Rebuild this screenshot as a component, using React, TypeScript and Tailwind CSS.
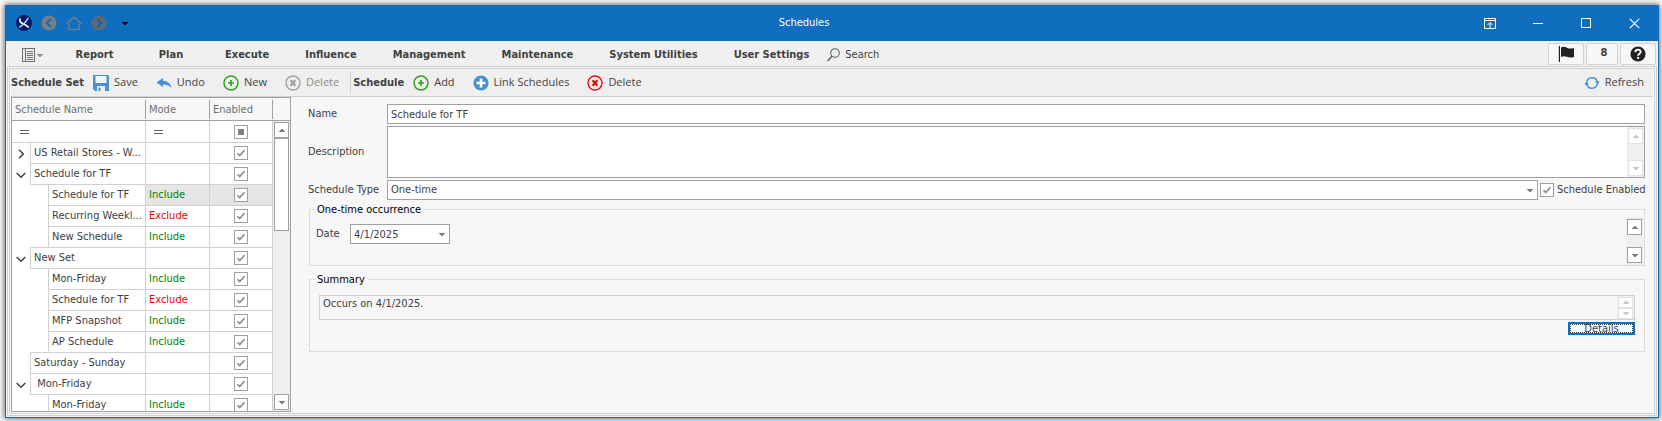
import React from "react";

const UI = "font-['DejaVu_Sans_Condensed','DejaVu_Sans',sans-serif]";
const SEGOE = "font-['Open_Sans','Noto_Sans',sans-serif]";

type Row = {
  name: string;
  level: 0 | 1;
  expander?: "open" | "closed";
  mode?: "Include" | "Exclude";
  selected?: boolean;
};

const rows: Row[] = [
  { name: "US Retail Stores - W...", level: 0, expander: "closed" },
  { name: "Schedule for TF", level: 0, expander: "open" },
  { name: "Schedule for TF", level: 1, mode: "Include", selected: true },
  { name: "Recurring Weekl...", level: 1, mode: "Exclude" },
  { name: "New Schedule", level: 1, mode: "Include" },
  { name: "New Set", level: 0, expander: "open" },
  { name: "Mon-Friday", level: 1, mode: "Include" },
  { name: "Schedule for TF", level: 1, mode: "Exclude" },
  { name: "MFP Snapshot", level: 1, mode: "Include" },
  { name: "AP Schedule", level: 1, mode: "Include" },
  { name: "Saturday - Sunday", level: 0 },
  { name: "\u00a0Mon-Friday", level: 0, expander: "open" },
  { name: "Mon-Friday", level: 1, mode: "Include" },
];

function Caret({ up = false, className = "" }: { up?: boolean; className?: string }) {
  return (
    <svg width="6" height="3" viewBox="0 0 6 3" className={className} shapeRendering="crispEdges" aria-hidden="true">
      <path d={up ? "M0 3V2h1V1h1V0h2v1h1v1h1v1z" : "M0 0v1h1v1h1v1h2V2h1V1h1V0z"} fill="currentColor" />
    </svg>
  );
}

function ScrollButton({ up = false, dim = false, short = false, label }: { up?: boolean; dim?: boolean; short?: boolean; label: string }) {
  return (
    <button
      type="button"
      aria-label={label}
      className={`flex w-[15px] shrink-0 items-center justify-center border bg-white ${short ? "h-[11px]" : "h-4"} ${
        dim ? "border-[#e2e2e2] text-[#c8c8c8]" : "border-[#a0a0a0] text-[#808080]"
      }`}
    >
      <Caret up={up} />
    </button>
  );
}

function CheckBox({ id, label, mixed = false }: { id?: string; label?: string; mixed?: boolean }) {
  return (
    <span className="inline-grid size-[14px] shrink-0 place-items-center">
      <input
        id={id}
        type="checkbox"
        aria-label={label}
        defaultChecked={!mixed}
        className="peer col-start-1 row-start-1 size-[14px] appearance-none border border-[#a0a0a0] bg-white"
      />
      {mixed ? (
        <span className="pointer-events-none col-start-1 row-start-1 size-[6px] bg-[#808080]" />
      ) : (
        <svg width="10" height="10" viewBox="0 0 10 10" className="pointer-events-none invisible col-start-1 row-start-1 peer-checked:visible" aria-hidden="true">
          <path d="M1.5 5.200l2.200 2.300L8.500 2.300" fill="none" stroke="#888" strokeWidth="1.600" />
        </svg>
      )}
    </span>
  );
}

function CirclePlus({ solid = false }: { solid?: boolean }) {
  return solid ? (
    <svg width="16" height="16" viewBox="0 0 16 16" aria-hidden="true">
      <circle cx="8" cy="8" r="7.6" fill="#4a90d0" />
      <path d="M8 3.5v9M3.5 8h9" stroke="#fff" strokeWidth="2.6" />
    </svg>
  ) : (
    <svg width="16" height="16" viewBox="0 0 16 16" aria-hidden="true">
      <circle cx="8" cy="8" r="7" fill="none" stroke="#2fa31c" strokeWidth="1.5" />
      <path d="M8 5v6M5 8h6" stroke="#2fa31c" strokeWidth="1.7" />
    </svg>
  );
}

function CircleX({ color }: { color: string }) {
  return (
    <svg width="16" height="16" viewBox="0 0 16 16" aria-hidden="true">
      <circle cx="8" cy="8" r="7" fill="none" stroke={color} strokeWidth="1.4" />
      <path d="M5.6 5.200l4.800 5.600M10.400 5.200l-4.800 5.600" stroke={color} strokeWidth="2.3" />
    </svg>
  );
}

function SaveIcon() {
  return (
    <svg width="16" height="16" viewBox="0 0 16 16" aria-hidden="true">
      <path d="M0 0h15l1 1v15H2l-2-2z" fill="#4a90d0" />
      <path d="M2.500 1h11v7h-11z" fill="#f2f6fa" />
      <path d="M4 11h8v5H4z" fill="#efefef" />
      <path d="M5.500 12.500h2V16h-2z" fill="#4a90d0" />
    </svg>
  );
}

function UndoIcon() {
  return (
    <svg width="16" height="16" viewBox="0 0 16 16" aria-hidden="true">
      <path d="M0.5 7.500L7 3v2.700c4.500.2 7.600 2.500 8.500 7.300C13.500 10.500 11 9.400 7 9.400V12z" fill="#4a90d0" />
    </svg>
  );
}

function RefreshIcon() {
  return (
    <svg width="16" height="16" viewBox="0 0 16 16" aria-hidden="true">
      <path d="M2.600 7.500A5.500 5.500 0 0 1 13.400 7M13.400 8.500A5.500 5.500 0 0 1 2.600 9" fill="none" stroke="#4a90d0" strokeWidth="1.500" />
      <path d="M11 6.600h4.800L13.600 9.600zM5 9.400H.2L2.400 6.400z" fill="#4a90d0" />
    </svg>
  );
}

function ToolButton({ icon, label, disabled = false }: { icon: React.ReactNode; label: string; disabled?: boolean }) {
  return (
    <button
      type="button"
      disabled={disabled}
      className={`flex h-full items-center gap-[5px] px-[9px] text-[11px] ${SEGOE} ${disabled ? "text-[#8c8c8c]" : "text-[#444444]"}`}
    >
      {icon}
      {label}
    </button>
  );
}

function TitleBar() {
  return (
    <header className="flex h-9 shrink-0 items-center bg-[#106ebe] text-white">
      <div className="flex w-[136px] shrink-0 items-center gap-[9px] pl-[10px]">
        <svg width="16" height="16" viewBox="0 0 16 16" aria-hidden="true">
          <circle cx="8" cy="8" r="8" fill="#001a66" />
          <path d="M3.800 3.500C3.800 7 5 8.300 7 8.600S10.500 11 12.800 12.300" fill="none" stroke="#fff" strokeWidth="1.700" />
          <path d="M12.300 2.800C10.500 6 8 9.500 3.200 12.300" fill="none" stroke="#b9d8ff" strokeWidth="1.400" />
        </svg>
        <button type="button" aria-label="Back">
          <svg width="16" height="16" viewBox="0 0 16 16" aria-hidden="true">
            <circle cx="8" cy="8" r="7.500" fill="#7b7d80" />
            <path d="M9.800 4L5.800 8l4 4" fill="none" stroke="#106ebe" strokeWidth="2" />
          </svg>
        </button>
        <button type="button" aria-label="Home">
          <svg width="16" height="16" viewBox="0 0 16 16" aria-hidden="true">
            <path d="M.5 9L8 2l7.500 7M3 9v5.500h10V9" fill="none" stroke="#7a8188" strokeWidth="1.200" />
          </svg>
        </button>
        <button type="button" aria-label="Forward">
          <svg width="16" height="16" viewBox="0 0 16 16" className="-mr-px" aria-hidden="true">
            <circle cx="8" cy="8" r="7.500" fill="#5a6a78" />
            <path d="M6.200 4l4 4-4 4" fill="none" stroke="#1664a8" strokeWidth="2" />
          </svg>
        </button>
        <button type="button" aria-label="Customize" className="ml-[7px] text-black">
          <Caret />
        </button>
      </div>
      <h1 className={`flex-1 text-center text-[11px] ${UI}`}>Schedules</h1>
      <div className="flex shrink-0">
        <button type="button" aria-label="Ribbon display" className="flex h-9 w-12 items-center justify-center">
          <svg width="12" height="11" viewBox="0 0 12 11" fill="none" stroke="#fff" aria-hidden="true">
            <path d="M.5.500h11v10H.5zM.5 2.500h11M6 10V5M3.500 7L6 4.500 8.500 7" />
          </svg>
        </button>
        <button type="button" aria-label="Minimize" className="flex h-9 w-12 items-center justify-center">
          <span className="h-px w-[10px] bg-white" />
        </button>
        <button type="button" aria-label="Maximize" className="flex h-9 w-12 items-center justify-center">
          <span className="size-[10px] border border-white" />
        </button>
        <button type="button" aria-label="Close" className="flex h-9 w-12 items-center justify-center">
          <svg width="11" height="11" viewBox="0 0 11 11" aria-hidden="true">
            <path d="M.8.800l9.400 9.400M10.200.800L.8 10.200" stroke="#fff" strokeWidth="1.200" />
          </svg>
        </button>
      </div>
    </header>
  );
}

function MenuBar() {
  const items = ["Execute", "Influence", "Management", "Maintenance", "System Utilities", "User Settings"];
  const side = "flex h-[22px] items-center justify-center rounded-[2px] border border-[#d2d2d2] bg-[#f7f7f7]";
  return (
    <nav className={`flex h-[25px] shrink-0 items-center pr-0.5 text-[11px] text-[#404040] ${UI}`}>
      <div className="flex h-full items-center pt-[3px]">
        <button type="button" aria-label="Application menu" className="ml-4 flex items-center gap-0.5 text-[#909090]">
          <svg width="13" height="14" viewBox="0 0 13 14" fill="none" stroke="#6e6e6e" shapeRendering="crispEdges" aria-hidden="true">
            <path d="M.5.500h12v13H.5zM3.500.500v13M5 3.500h6M5 5.500h6M5 7.500h6M5 9.500h6M5 11.500h6" />
          </svg>
          <Caret />
        </button>
        <div className="ml-3 flex font-bold">
          <button type="button" className="w-[79px] text-center">Report</button>
          <button type="button" className="w-[70px] pl-1 text-center">Plan</button>
          {items.map((t) => (
            <button key={t} type="button" className={t === "Execute" ? "ml-[3px] px-[18px]" : "px-[18px]"}>
              {t}
            </button>
          ))}
        </div>
        <button type="button" className="flex items-center gap-[5px]">
          <svg width="13" height="14" viewBox="0 0 13 14" fill="none" stroke="#606060" aria-hidden="true">
            <circle cx="8" cy="5" r="4.300" strokeWidth="1.100" />
            <path d="M5 8.200L.6 13" strokeWidth="1.500" />
          </svg>
          Search
        </button>
      </div>
      <div className="ml-auto flex gap-0.5">
        <button type="button" aria-label="Flags" className={`${side} w-9`}>
          <svg width="17" height="16" viewBox="0 0 17 16" fill="#222" aria-hidden="true">
            <path d="M.8 0h1.200v16H.8z" />
            <path d="M3 1.500c2-1 4-.8 6 .2s4 1.200 7 .3v9c-3 1-5 .6-7-.2s-4-.9-6 .2z" />
          </svg>
        </button>
        <button type="button" className={`${side} w-8 pl-1 font-bold`}>8</button>
        <button type="button" aria-label="Help" className={`${side} w-9`}>
          <svg width="16" height="16" viewBox="0 0 16 16" aria-hidden="true">
            <circle cx="8" cy="8" r="7.600" fill="#222" />
            <path d="M5.300 6.200C5.300 2.700 10.900 2.900 10.700 6 10.600 7.800 8.100 7.700 8.100 9.700" fill="none" stroke="#fff" strokeWidth="1.900" />
            <path d="M7.100 10.900h2v2h-2z" fill="#fff" />
          </svg>
        </button>
      </div>
    </nav>
  );
}

function ToolBar() {
  return (
    <div className={`flex h-7 shrink-0 items-center border-b border-[#d0d0d0] bg-[#efefef] text-[11px] text-[#404040] ${UI}`}>
      <b className="pt-0.5">Schedule Set</b>
      <ToolButton icon={<SaveIcon />} label="Save" />
      <ToolButton icon={<UndoIcon />} label="Undo" />
      <ToolButton icon={<CirclePlus />} label="New" />
      <ToolButton icon={<CircleX color="#a0a0a0" />} label="Delete" disabled />
      <span className="mx-[2px] h-[21px] w-px bg-[#d0d0d0]" />
      <b className="pt-0.5">Schedule</b>
      <ToolButton icon={<CirclePlus />} label="Add" />
      <ToolButton icon={<CirclePlus solid />} label="Link Schedules" />
      <ToolButton icon={<CircleX color="#e31010" />} label="Delete" />
      <div className="ml-auto h-full">
        <ToolButton icon={<RefreshIcon />} label="Refresh" />
      </div>
    </div>
  );
}

function EqualsGlyph() {
  return (
    <svg width="9" height="4" viewBox="0 0 9 4" shapeRendering="crispEdges" aria-hidden="true">
      <path d="M0 0h9v1H0zM0 3h9v1H0z" fill="#606060" />
    </svg>
  );
}

function ScheduleTree() {
  const head = "h-[23px] border-b border-[#a0a0a0] p-0 text-left font-normal";
  const headText = "h-[19px] border-r border-[#a0a0a0] pl-[3px] leading-[19px]";
  const line = "border-r border-b border-[#d0d0d0]";
  const filter = `h-[22px] ${line}`;
  const cell = `h-[21px] ${line}`;
  return (
    <section className="relative flex w-[280px] shrink-0 flex-col border border-[#a0a0a0] bg-white">
      <div className="min-h-0 flex-1 overflow-hidden">
        <table className="w-full table-fixed border-separate border-spacing-0">
          <colgroup>
            <col className="w-[134px]" />
            <col className="w-16" />
            <col className="w-[63px]" />
            <col />
          </colgroup>
          <thead className="bg-[#f7f7f7] text-[#707070]">
            <tr>
              <th className={head}><div className={headText}>Schedule Name</div></th>
              <th className={head}><div className={headText}>Mode</div></th>
              <th className={head}><div className={headText}>Enabled</div></th>
              <th className={head} />
            </tr>
          </thead>
          <tbody>
            <tr>
              <td className={`${filter} pl-2`}><EqualsGlyph /></td>
              <td className={`${filter} pl-2`}><EqualsGlyph /></td>
              <td className={`${filter} p-0`}><div className="flex justify-center"><CheckBox label="Filter enabled" mixed /></div></td>
              <td rowSpan={rows.length + 1} className="bg-[#efefef] p-0" />
            </tr>
            {rows.map((r, i) => {
              const next = rows[i + 1];
              const closes = r.level === 1 && next && next.level === 0;
              return (
                <tr key={i}>
                  <td className="h-[21px] border-r border-[#d0d0d0] p-0">
                    <div className="flex h-[21px]">
                      <span className="flex w-[18px] shrink-0 items-center justify-center text-[#404040]">
                        {r.expander && (
                          <button type="button" aria-label={r.expander === "open" ? "Collapse" : "Expand"}>
                            <svg width="10" height="10" viewBox="0 0 10 10" fill="none" stroke="currentColor" strokeWidth="1.500" aria-hidden="true">
                              <path d={r.expander === "open" ? "M.7 3L5 7.300 9.300 3" : "M3 .7L7.300 5 3 9.300"} />
                            </svg>
                          </button>
                        )}
                      </span>
                      {r.level === 1 && <span className={closes ? "w-[18px] shrink-0 border-b border-[#d0d0d0]" : "w-[18px] shrink-0"} />}
                      <span className="min-w-0 flex-1 border-b border-l border-[#d0d0d0] pl-[3px] leading-5 whitespace-nowrap">{r.name}</span>
                    </div>
                  </td>
                  <td className={`${cell} py-0 pr-0 pl-[3px] leading-5 ${r.mode === "Exclude" ? "text-[#f00000]" : "text-[#008000]"} ${r.selected ? "bg-[#e5e5e5]" : ""}`}>
                    {r.mode}
                  </td>
                  <td className={`${cell} p-0 ${r.selected ? "bg-[#e5e5e5]" : ""}`}>
                    <div className="flex justify-center"><CheckBox label={`${r.name} enabled`} /></div>
                  </td>
                </tr>
              );
            })}
          </tbody>
        </table>
      </div>
      <div className="absolute top-[23px] right-0 bottom-0 flex w-[17px] flex-col items-center bg-[#efefef] py-px">
        <ScrollButton up label="Scroll up" />
        <div className="h-[93px] w-[15px] border border-[#a0a0a0] bg-white" />
        <span className="flex-1" />
        <ScrollButton label="Scroll down" />
      </div>
    </section>
  );
}

function ScheduleForm() {
  const box = "border border-[#a0a0a0] bg-white";
  const legend = "ml-[6px] pr-[3px] pl-px leading-[15px] text-black";
  const label = "w-[79px] shrink-0";
  return (
    <form className="min-w-0 flex-1 pt-[7px] pr-2 pl-[17px]">
      <div className="flex flex-col gap-0.5">
        <div className="flex items-center">
          <label htmlFor="name" className={label}>Name</label>
          <input id="name" type="text" defaultValue="Schedule for TF" className={`h-5 min-w-0 flex-1 px-[3px] ${box}`} />
        </div>
        <div className="flex items-center">
          <label htmlFor="description" className={label}>Description</label>
          <div className={`flex h-[52px] min-w-0 flex-1 ${box}`}>
            <textarea id="description" className="min-w-0 flex-1 resize-none overflow-hidden px-[3px]" />
            <div className="flex w-[17px] flex-col items-center justify-between bg-[#efefef] py-px">
              <ScrollButton up dim label="Scroll description up" />
              <ScrollButton dim label="Scroll description down" />
            </div>
          </div>
        </div>
        <div className="flex items-center">
          <label htmlFor="type" className={label}>Schedule Type</label>
          <div className="grid min-w-0 flex-1 items-center text-[#808080]">
            <select id="type" className={`col-start-1 row-start-1 h-5 w-full appearance-none px-[3px] text-[#404040] ${box}`}>
              <option>One-time</option>
              <option>Recurring</option>
            </select>
            <Caret className="pointer-events-none col-start-1 row-start-1 mr-[5px] justify-self-end" />
          </div>
          <div className="flex w-[107px] shrink-0 items-center gap-[3px] pl-[2px]">
            <CheckBox id="enabled" />
            <label htmlFor="enabled" className="whitespace-nowrap">Schedule Enabled</label>
          </div>
        </div>
      </div>

      <fieldset className="mt-0.5 ml-px border border-[#dcdcdc]">
        <legend className={legend}>One-time occurrence</legend>
        <div className="flex h-12 items-start pr-px pl-[6px]">
          <label htmlFor="date" className="mt-[7px] w-[34px] leading-5">Date</label>
          <div className="mt-[7px] grid w-[100px] items-center text-[#808080]">
            <input id="date" type="text" defaultValue="4/1/2025" className={`col-start-1 row-start-1 h-5 w-full px-[3px] text-[#404040] ${box}`} />
            <Caret className="pointer-events-none col-start-1 row-start-1 mr-[5px] justify-self-end" />
          </div>
          <div className="ml-auto flex h-12 w-[17px] flex-col items-center justify-between bg-[#efefef] py-0.5">
            <ScrollButton up label="Scroll occurrence up" />
            <ScrollButton label="Scroll occurrence down" />
          </div>
        </div>
      </fieldset>

      <fieldset className="mt-[6px] ml-px border border-[#dcdcdc]">
        <legend className={legend}>Summary</legend>
        <div className="px-[9px] pt-2 pb-4">
          <div className="flex h-[25px] border border-[#d0d0d0]">
            <textarea
              aria-label="Summary"
              readOnly
              defaultValue="Occurs on 4/1/2025."
              className="min-w-0 flex-1 resize-none overflow-hidden px-[3px] leading-[15px]"
            />
            <div className="flex w-[17px] flex-col items-center justify-between bg-[#f0f0f0] py-px">
              <ScrollButton up dim short label="Scroll summary up" />
              <ScrollButton dim short label="Scroll summary down" />
            </div>
          </div>
          <button
            type="button"
            className="mt-0.5 ml-auto flex h-[13px] w-[67px] items-center justify-center bg-white leading-[13px] outline-1 outline-offset-[-3px] outline-[#303030] outline-dotted ring-2 ring-[#106ebe] ring-inset"
          >
            Details
          </button>
        </div>
      </fieldset>
    </form>
  );
}

export default function App() {
  return (
    <div className="flex h-screen flex-col bg-white pt-[5px] pr-[3px] pb-[3px] pl-[5px]">
      <div className={`flex min-h-0 flex-1 flex-col border border-t-0 border-[#106ebe] bg-[#f0f0f0] text-[11px] text-[#404040] shadow-[0_0_6px_1px_rgba(0,0,0,0.6)] ${UI}`}>
        <TitleBar />
        <MenuBar />
        <main className="mx-px mb-px flex min-h-0 flex-1 border border-[#d0d0d0] bg-[#f7f7f7] p-px">
          <div className="flex min-w-0 flex-1 flex-col border border-[#d0d0d0] px-px pb-px">
            <ToolBar />
            <div className="flex min-h-0 flex-1">
              <ScheduleTree />
              <ScheduleForm />
            </div>
          </div>
        </main>
      </div>
    </div>
  );
}
